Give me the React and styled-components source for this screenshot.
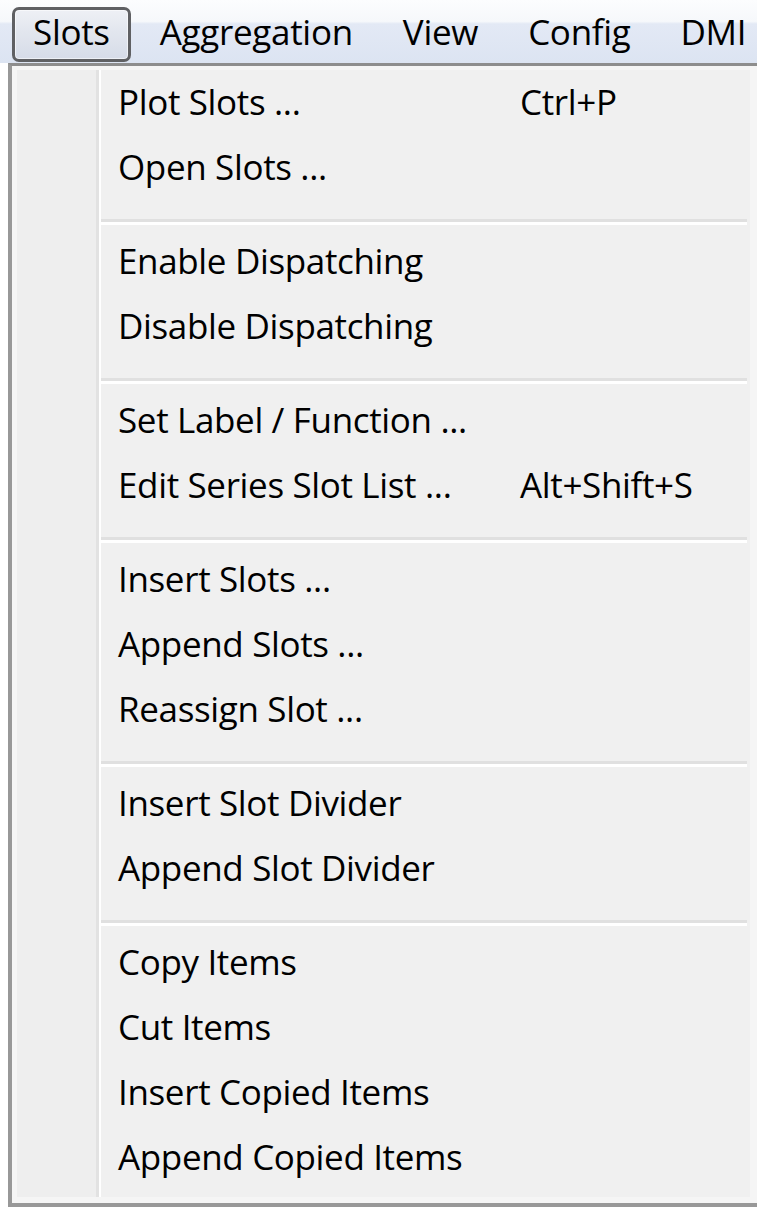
import React from 'react'
import styled, { createGlobalStyle } from 'styled-components'

const GlobalStyle = createGlobalStyle`
html, body {
  margin: 0;
  padding: 0;
  background: #ffffff;
}
body {
  font-family: "Open Sans", "Noto Sans", "DejaVu Sans", sans-serif;
  color: #000000;
}
`

const menuTitles = ['Slots', 'Aggregation', 'View', 'Config', 'DMI']

// null marks a separator
const slotItems = [
  { label: 'Plot Slots ...', shortcut: 'Ctrl+P' },
  { label: 'Open Slots ...' },
  null,
  { label: 'Enable Dispatching' },
  { label: 'Disable Dispatching' },
  null,
  { label: 'Set Label / Function ...' },
  { label: 'Edit Series Slot List ...', shortcut: 'Alt+Shift+S' },
  null,
  { label: 'Insert Slots ...' },
  { label: 'Append Slots ...' },
  { label: 'Reassign Slot ...' },
  null,
  { label: 'Insert Slot Divider' },
  { label: 'Append Slot Divider' },
  null,
  { label: 'Copy Items' },
  { label: 'Cut Items' },
  { label: 'Insert Copied Items' },
  { label: 'Append Copied Items' },
]

const App = () => {
  return (
    <Window>
      <GlobalStyle />
      <MenuBar>
        {menuTitles.map((title, i) => (
          <BarItem key={title} open={i === 0}>{title}</BarItem>
        ))}
      </MenuBar>
      <Dropdown>
        <Panel>
          <Gutter />
          <GutterLine />
          <ItemList>
            {slotItems.map((item, i) =>
              item ? (
                <Item key={i}>
                  <Label>{item.label}</Label>
                  {item.shortcut && <Shortcut>{item.shortcut}</Shortcut>}
                </Item>
              ) : (
                <Separator key={i} />
              )
            )}
          </ItemList>
        </Panel>
      </Dropdown>
    </Window>
  )
}

export default App

const Window = styled.div`
width: 757px;
display: flex;
flex-direction: column;
`
const MenuBar = styled.div`
height: 63px;
display: flex;
align-items: flex-start;
gap: 8px;
padding: 7px 0 0 12px;
box-sizing: border-box;
background: linear-gradient(to bottom, #fcfdfe 0%, #f6f8fb 34%, #e3e9f5 38%, #dce4f2 100%);
`
const BarItem = styled.div`
height: 55px;
box-sizing: border-box;
padding: 0 18px 6px 18px;
font-size: 35px;
line-height: 43px;
letter-spacing: -0.3px;
white-space: nowrap;
border: 3px solid ${p => (p.open ? '#5f6063' : 'transparent')};
border-radius: 7px;
background: ${p => (p.open ? 'linear-gradient(to bottom, #eef0f5 0%, #e2e6ee 45%, #d6dce8 100%)' : 'transparent')};
box-shadow: ${p => (p.open ? 'inset 0 0 0 1px rgba(255,255,255,0.55)' : 'none')};
`
const Dropdown = styled.div`
margin-left: 8px;
border-top: 3px solid #8d8d8d;
border-left: 4px solid #989898;
border-bottom: 4px solid #989898;
background: #f5f5f5;
padding: 4px 7px 6px 5px;
`
const Panel = styled.div`
display: flex;
background: #f0f0f0;
`
const Gutter = styled.div`
width: 79px;
background: #eeeeee;
`
const GutterLine = styled.div`
width: 3px;
background: #e2e2e2;
border-right: 2px solid #ffffff;
`
const ItemList = styled.div`
flex: 1;
display: flex;
flex-direction: column;
padding: 4px 3px 3px 0;
`
const Item = styled.div`
height: 65px;
display: grid;
grid-template-columns: 402px auto;
align-items: start;
padding: 0 0 9px 17px;
box-sizing: border-box;
font-size: 35px;
line-height: 56px;
letter-spacing: -0.35px;
white-space: nowrap;
`
const Label = styled.span``
const Shortcut = styled.span``
const Separator = styled.div`
height: 3px;
margin: 15px 0 8px 0;
background: #e0e0e0;
border-bottom: 3px solid #ffffff;
`
